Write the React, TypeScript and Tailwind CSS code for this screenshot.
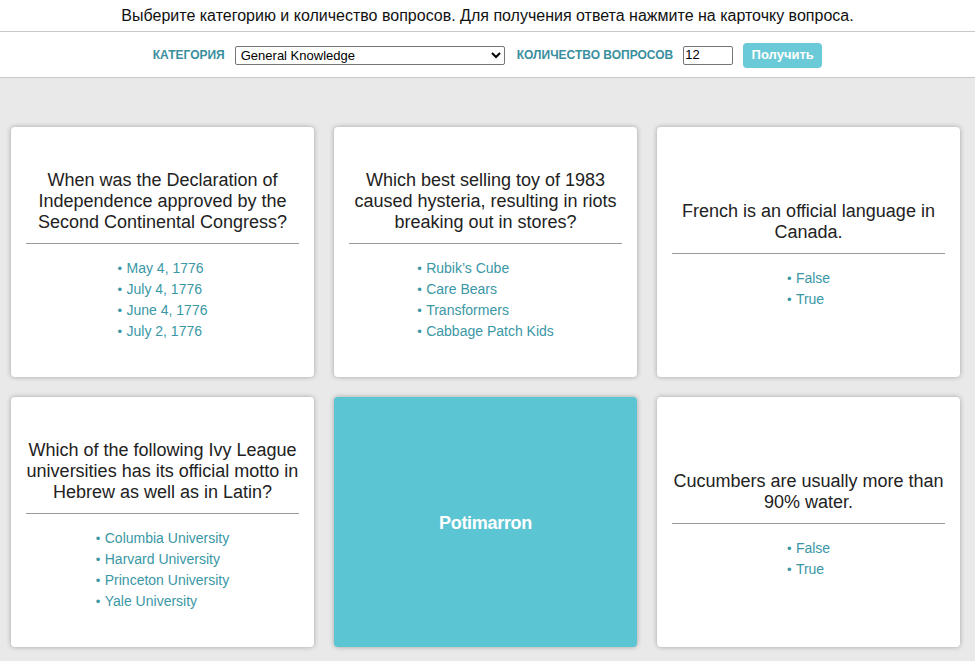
import { useState } from 'react';

type Card = {
  question: string;
  answers: string[];
  revealed?: string;
};

const cards: Card[] = [
  {
    question: 'When was the Declaration of Independence approved by the Second Continental Congress?',
    answers: ['May 4, 1776', 'July 4, 1776', 'June 4, 1776', 'July 2, 1776'],
  },
  {
    question: 'Which best selling toy of 1983 caused hysteria, resulting in riots breaking out in stores?',
    answers: ['Rubik\u2019s Cube', 'Care Bears', 'Transformers', 'Cabbage Patch Kids'],
  },
  {
    question: 'French is an official language in Canada.',
    answers: ['False', 'True'],
  },
  {
    question: 'Which of the following Ivy League universities has its official motto in Hebrew as well as in Latin?',
    answers: ['Columbia University', 'Harvard University', 'Princeton University', 'Yale University'],
  },
  {
    question: 'What type of fruit is a Potimarron?',
    answers: ['Potimarron'],
    revealed: 'Potimarron',
  },
  {
    question: 'Cucumbers are usually more than 90% water.',
    answers: ['False', 'True'],
  },
];

function QuestionCard({ card }: { card: Card }) {
  const [open, setOpen] = useState(!!card.revealed);

  if (open && card.revealed) {
    return (
      <div
        onClick={() => setOpen(false)}
        className="h-[250px] rounded-[4px] bg-[#5bc5d3] shadow-[0_0_5px_rgba(0,0,0,0.3)] flex items-center justify-center pt-[3px] cursor-pointer"
      >
        <span className="text-[18px] font-bold text-white tracking-[-0.3px]">{card.revealed}</span>
      </div>
    );
  }

  return (
    <div
      onClick={() => setOpen(true)}
      className="h-[250px] rounded-[4px] bg-white shadow-[0_0_5px_rgba(0,0,0,0.3)] flex flex-col justify-center px-[15px] pt-[8px] cursor-pointer"
    >
      <div className="text-center text-[18px] leading-[21px] text-[#222] -mx-[2px]">
        {card.question}
      </div>
      <div className="h-px bg-[#9a9a9a] mt-[10px]" />
      <div className="text-center pt-[14px]">
        <ul className="inline-block text-left">
          {card.answers.map((a) => (
            <li key={a} className="text-[14px] leading-[21px] text-[#3a97a5]">
              <span className="inline-block w-[9px] text-[13px]">•</span>
              {a}
            </li>
          ))}
        </ul>
      </div>
    </div>
  );
}

export default function App() {
  const [count, setCount] = useState('12');

  return (
    <div className="min-h-[661px] bg-[#e9e9e9] font-['Liberation_Sans',Arial,sans-serif]">
      <header className="bg-white">
        <div className="h-[32px] flex items-center justify-center border-b border-[#c8c8c8] text-[16px] text-[#111]">
          Выберите категорию и количество вопросов. Для получения ответа нажмите на карточку вопроса.
        </div>
        <div className="h-[46px] flex items-center justify-center border-b border-[#c8c8c8] pt-[1px]">
          <label className="text-[12px] font-bold uppercase text-[#3a8f9e] mr-[10px]">Категория</label>
          <select className="w-[270px] h-[19px] border border-[#767676] rounded-[2px] text-[13px] text-black bg-white px-[1px]">
            <option>General Knowledge</option>
            <option>Entertainment: Books</option>
            <option>Science &amp; Nature</option>
          </select>
          <label className="text-[12px] font-bold uppercase text-[#3a8f9e] ml-[12px] mr-[10px]">Количество вопросов</label>
          <input
            value={count}
            onChange={(e) => setCount(e.target.value)}
            className="w-[50px] h-[19px] border border-[#767676] rounded-[2px] text-[13px] text-black px-[1px]"
          />
          <button className="ml-[10px] w-[79px] h-[25px] rounded-[4px] bg-[#5bc5d3] text-white text-[13px] font-bold opacity-90">
            Получить
          </button>
        </div>
      </header>

      <main className="pt-[49px] pl-[11px] pb-[13px]">
        <div className="grid grid-cols-[303px_303px_303px] gap-[20px]">
          {cards.map((c) => (
            <QuestionCard key={c.question} card={c} />
          ))}
        </div>
      </main>
    </div>
  );
}
